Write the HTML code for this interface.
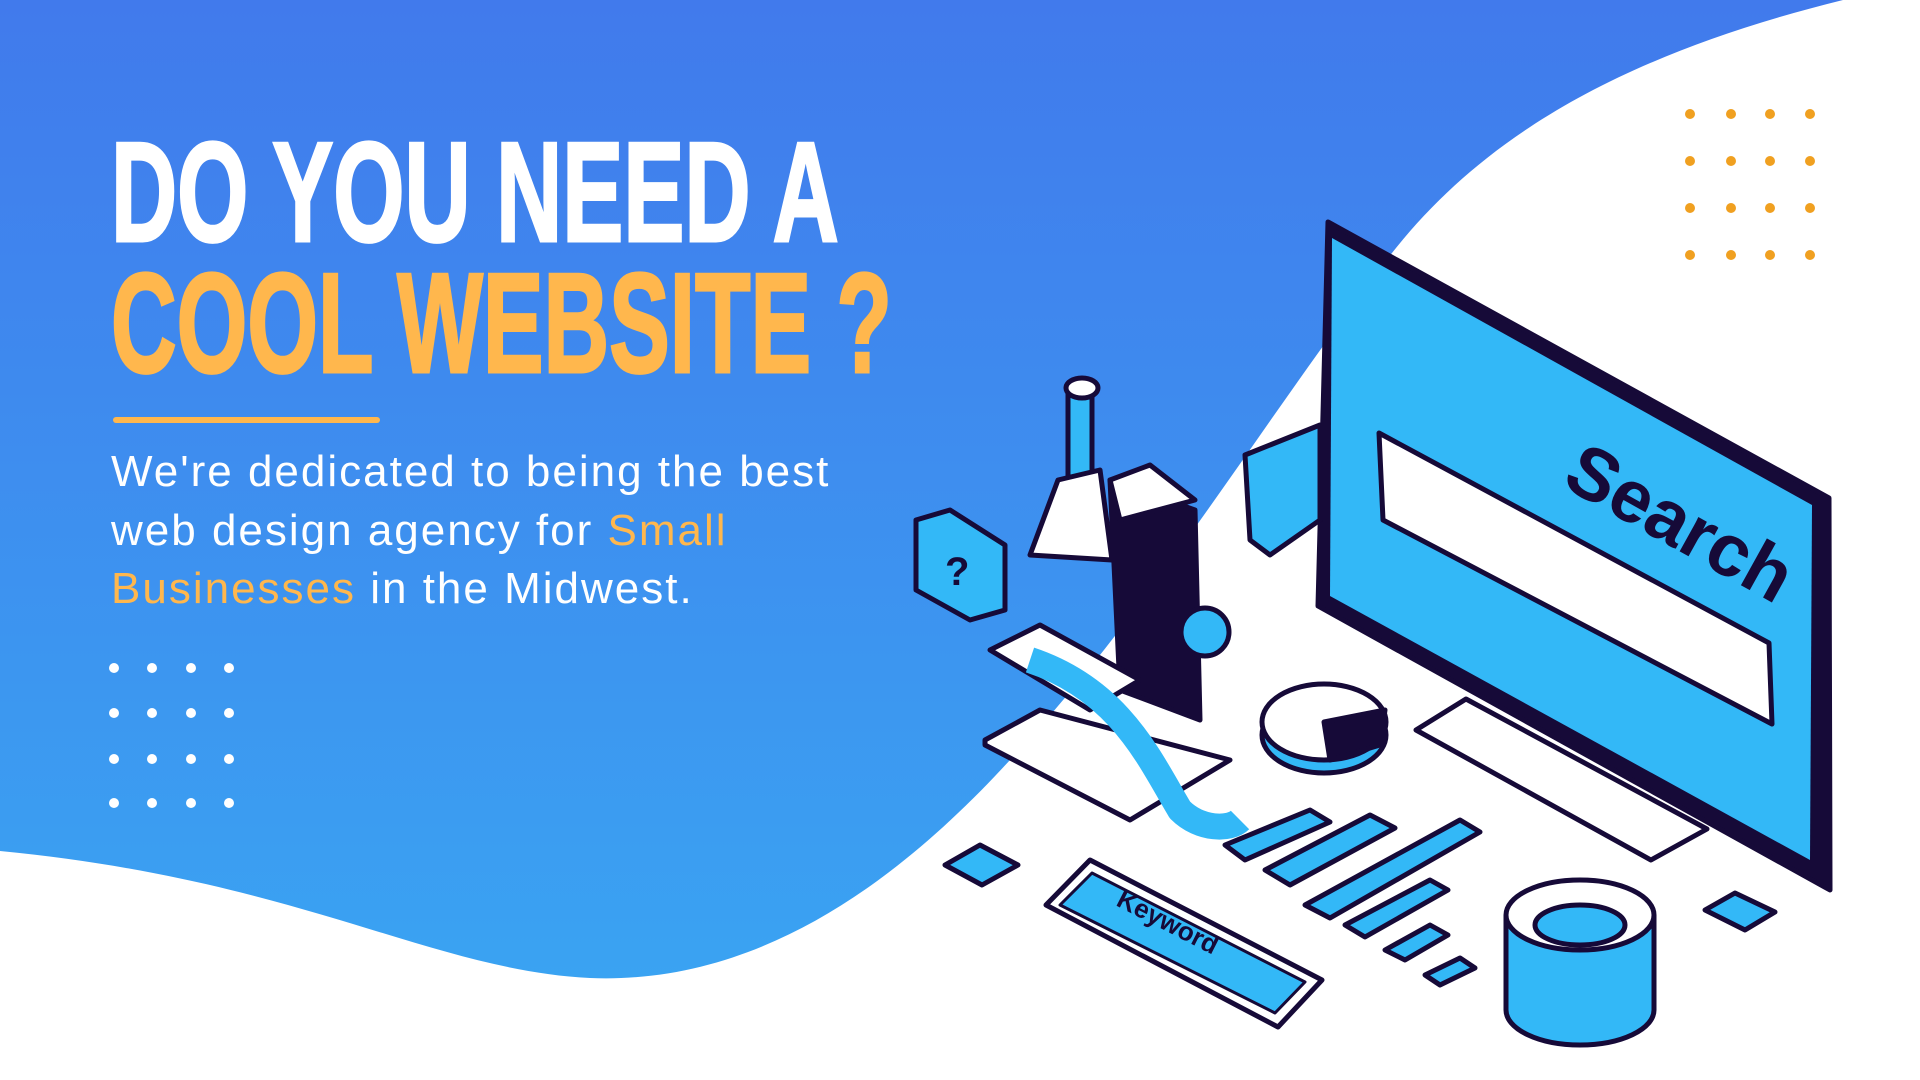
<!DOCTYPE html>
<html><head><meta charset="utf-8"><style>
html,body{margin:0;padding:0;width:1920px;height:1080px;overflow:hidden;background:#fff;font-family:"Liberation Sans",sans-serif}
.h{position:absolute;left:111px;font-weight:bold;white-space:nowrap;transform-origin:0 0;font-size:142px;line-height:1;-webkit-text-stroke:3px currentColor}
.p{position:absolute;left:111px;color:#fff;font-size:44px;white-space:nowrap;letter-spacing:2px}
.o{color:#FFB74D}
.dot{position:absolute;width:10px;height:10px;border-radius:50%}
</style></head><body>
<svg width="1920" height="1080" style="position:absolute;left:0;top:0">
<defs><linearGradient id="g" x1="0" y1="0" x2="0" y2="1"><stop offset="0" stop-color="#417AEC"/><stop offset="1" stop-color="#3AA3F2"/></linearGradient></defs>
<path d="M0,0 H1843 C1600,60 1470,150 1385,262 C1250,440 1150,610 1010,760 C900,880 760,985 590,978 C430,970 300,880 0,851 Z" fill="url(#g)"/>
<g stroke="#160A38" stroke-width="5" stroke-linejoin="round">
<polygon points="1328,222 1829,498 1830,890 1318,606" fill="#160A38"/>
<polygon points="1332,238 1812,505 1810,860 1330,596" fill="#33B8F7" stroke="none"/>
<polygon points="1379,433 1769,643 1772,724 1383,520" fill="#fff"/>
<polygon points="1416,730 1466,699 1707,829 1651,860" fill="#fff"/>
<rect x="1068" y="385" width="24" height="100" fill="#33B8F7"/>
<ellipse cx="1082" cy="388" rx="16" ry="10" fill="#fff"/>
<polygon points="1058,480 1100,470 1112,560 1030,555" fill="#fff"/>
<polygon points="1110,480 1195,510 1200,720 1120,690" fill="#160A38"/>
<polygon points="1110,480 1150,465 1195,500 1120,520" fill="#fff"/>
<polygon points="990,650 1040,625 1140,680 1090,710" fill="#fff"/>
<polygon points="985,740 1040,710 1230,760 1130,820 985,745" fill="#fff"/>
<circle cx="1205" cy="632" r="24" fill="#33B8F7"/>
<path d="M1030,660 C1120,690 1150,760 1180,810 C1200,830 1230,830 1240,820" fill="none" stroke="#33B8F7" stroke-width="26"/>
<polygon points="916,520 950,510 1005,545 1005,610 970,620 916,590" fill="#33B8F7"/>
<text x="945" y="585" font-size="40" font-weight="bold" fill="#160A38" stroke="none">?</text>
<path d="M1245,455 L1320,425 L1320,520 L1270,555 L1250,540 Z" fill="#33B8F7"/>
<ellipse cx="1324" cy="735" rx="62" ry="38" fill="#33B8F7"/>
<ellipse cx="1324" cy="722" rx="62" ry="38" fill="#fff"/>
<polygon points="1324,722 1385,710 1380,745 1330,760" fill="#160A38"/>
<polygon points="1225,845 1310,810 1330,822 1245,860" fill="#33B8F7"/>
<polygon points="1265,870 1370,815 1395,828 1290,885" fill="#33B8F7"/>
<polygon points="1305,905 1460,820 1480,832 1330,918" fill="#33B8F7"/>
<polygon points="1345,925 1430,880 1448,890 1365,937" fill="#33B8F7"/>
<polygon points="1385,950 1430,925 1448,935 1405,960" fill="#33B8F7"/>
<polygon points="1425,975 1460,958 1475,968 1440,985" fill="#33B8F7"/>
<polygon points="1046,905 1090,860 1322,980 1278,1027" fill="#fff"/>
<polygon points="1060,905 1092,873 1305,982 1275,1013" fill="#33B8F7" stroke-width="3"/>
<path d="M1506,915 V1010 A74,35 0 0 0 1654,1010 V915" fill="#33B8F7"/>
<ellipse cx="1580" cy="915" rx="74" ry="35" fill="#fff"/>
<ellipse cx="1580" cy="925" rx="45" ry="20" fill="#33B8F7"/>
<polygon points="945,865 980,845 1018,865 982,885" fill="#33B8F7"/>
<polygon points="1705,910 1735,893 1775,912 1745,930" fill="#33B8F7"/>
</g>
<text transform="translate(1560,485) rotate(29)" font-size="74" font-weight="bold" fill="#160A38" font-family="Liberation Sans">Search</text>
<text transform="translate(1115,905) rotate(27)" font-size="26" font-weight="bold" fill="#160A38" font-family="Liberation Sans">Keyword</text>
</svg>
<div class="h" style="top:122px;color:#fff;transform:scaleX(0.645)">DO YOU NEED A</div>
<div class="h" style="top:253px;color:#FFB74D;transform:scaleX(0.64)">COOL WEBSITE ?</div>
<div style="position:absolute;left:113px;top:417px;width:267px;height:6px;border-radius:3px;background:#FFB74D"></div>
<div class="p" style="top:447px">We're dedicated to being the best</div>
<div class="p" style="top:506px">web design agency for <span class="o">Small</span></div>
<div class="p" style="top:564px"><span class="o">Businesses</span> in the Midwest.</div>
<div id="dots"></div>
<script>
var d=document.getElementById('dots'),h='';
[114,152,191,229].forEach(function(x){[668,713,759,803].forEach(function(y){h+='<div class="dot" style="background:#fff;left:'+(x-5)+'px;top:'+(y-5)+'px"></div>';});});
[1705,1746,1785,1825].forEach(function(x){[114,161,208,255].forEach(function(y){h+='<div class="dot" style="background:#F0A020;left:'+(x-20)+'px;top:'+(y-5)+'px"></div>';});});
d.innerHTML=h;
</script>
</body></html>
